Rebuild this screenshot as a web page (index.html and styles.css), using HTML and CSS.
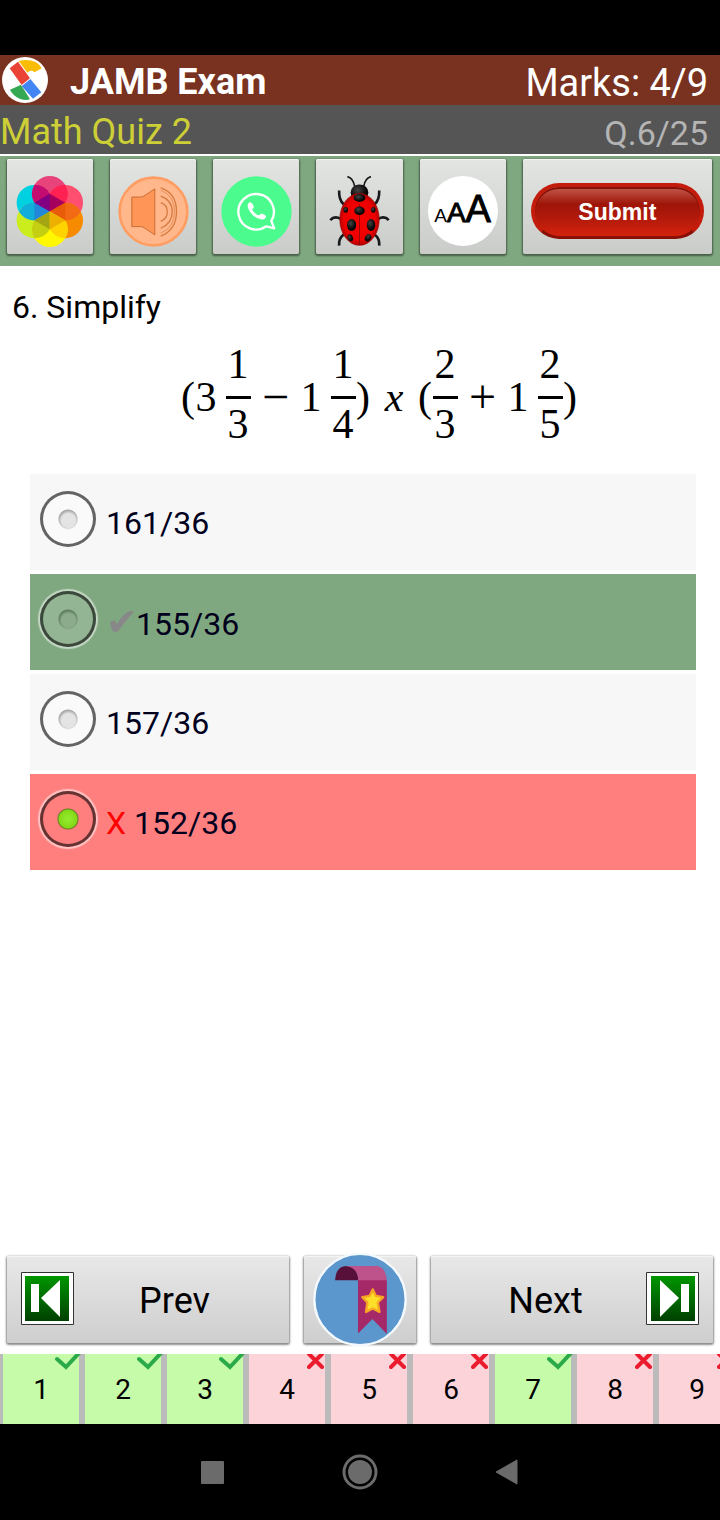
FILE: index.html
```html
<!DOCTYPE html>
<html lang="en">
<head>
<meta charset="utf-8">
<meta name="viewport" content="width=device-width, initial-scale=1">
<title>JAMB Exam</title>
<link rel="stylesheet" href="styles.css">
</head>
<body>
<div class="status-bar"></div>
<header>
  <div class="title-bar">
    <svg class="logo" viewBox="0 0 138 138" aria-hidden="true">
      <circle cx="69" cy="69" r="69" fill="#fff"/>
      <path d="M50 12C78 4 110 12 119 34L97 46C91 40 86 40 76 47Z" fill="#fbbc05"/>
      <path d="M24 98L57 83L84 127C60 134 34 119 24 98Z" fill="#34a853"/>
      <path d="M23 34L48 14L84 64L59 84Z" fill="#ea4335"/>
      <path d="M59 87L85 66L118 106L93 125Z" fill="#4285f4"/>
      <path d="M59 86L84 65" stroke="#fff" stroke-width="2" stroke-dasharray="4 3"/>
    </svg>
    <h1>JAMB Exam</h1>
    <span class="marks">Marks: 4/9</span>
  </div>
  <div class="quiz-bar">
    <h2>Math Quiz 2</h2>
    <span class="count">Q.6/25</span>
  </div>
</header>
<div class="toolbar">
  <button class="raised tool" aria-label="Themes">
    <svg class="tool-icon" viewBox="0 0 216 216" aria-hidden="true">
      <g>
        <circle cx="59" cy="81" r="54" fill="#00d1e0"/>
        <circle cx="153" cy="81" r="54" fill="#ff4f70"/>
        <circle cx="59" cy="135" r="54" fill="#cbec1d"/>
        <circle cx="153" cy="135" r="54" fill="#f78b00"/>
        <circle cx="106" cy="162" r="54" fill="#fff800"/>
        <circle cx="106" cy="54" r="54" fill="#e8447b"/>
      </g>
      <path d="M59 27A54 54 0 0 1 106 54L106 108L59 81A54 54 0 0 1 59 27Z" fill="#c40b70"/>
      <path d="M153 27A54 54 0 0 0 106 54L106 108L153 81A54 54 0 0 0 153 27Z" fill="#ff2152"/>
      <path d="M106 54L153 81L106 108L59 81Z" fill="#a5005e"/>
      <path d="M59 81L106 108A54 54 0 0 1 59 135A54 54 0 0 1 12 108A54 54 0 0 1 59 81Z" fill="#12aeda"/>
      <path d="M59 81L106 108L59 135Z" fill="#2187d8"/>
      <path d="M59 81L106 54L106 108Z" fill="#820081"/>
      <path d="M153 81A54 54 0 0 1 200 108A54 54 0 0 1 153 135L106 108Z" fill="#f26a14"/>
      <path d="M153 81L153 135L106 108Z" fill="#e85b08"/>
      <path d="M59 135L106 108L106 162A54 54 0 0 1 59 189A54 54 0 0 1 59 135Z" fill="#c3cf10"/>
      <path d="M106 108L106 162L59 135Z" fill="#a4a510"/>
      <path d="M106 108L153 135A54 54 0 0 1 153 189A54 54 0 0 1 106 162Z" fill="#ffd300"/>
      <path d="M106 108L153 135L106 162Z" fill="#eeb000"/>
    </svg>
  </button>
  <button class="raised tool" aria-label="Sound">
    <svg class="tool-icon" viewBox="0 0 216 216" aria-hidden="true">
      <circle cx="108" cy="108" r="103" fill="#ffb78b" stroke="#ff9d62" stroke-width="8"/>
      <path d="M42 64H69Q76 64 82 59L112 39V179L82 159Q76 154 69 154H42V64Z" fill="#ff9557" stroke="#c96c32" stroke-width="3"/>
      <path d="M130 81Q150 87 150 109T130 138M130 61Q165 73 165 109T130 159M130 36Q178 52 178 108T130 183" fill="none" stroke="#d47a3e" stroke-width="4"/>
      <path d="M130 43Q172 60 172 108T130 174" fill="none" stroke="#d47a3e" stroke-width="2"/>
    </svg>
  </button>
  <button class="raised tool" aria-label="WhatsApp">
    <svg class="tool-icon" viewBox="0 0 216 216" aria-hidden="true">
      <circle cx="108" cy="108" r="107" fill="#4cfb8e"/>
      <path d="M153 137A54 54 0 1 0 138 153L162 159Z" fill="none" stroke="#fff" stroke-width="7" stroke-linejoin="round"/>
      <path d="M88 80C81 82 79 91 84 101C92 118 107 130 123 132C132 133 138 127 137 122C132 117 126 114 123 114L114 120C105 116 99 110 95 102L100 95C99 88 93 80 88 80Z" fill="#fff"/>
    </svg>
  </button>
  <button class="raised tool" aria-label="Report a bug">
    <svg class="tool-icon" viewBox="0 0 216 216" aria-hidden="true">
      <defs><radialGradient id="shell"><stop offset="0" stop-color="#f80000"/><stop offset=".8" stop-color="#ed0000"/><stop offset="1" stop-color="#b30000"/></radialGradient>
      <radialGradient id="spot" cx=".4" cy=".35"><stop offset="0" stop-color="#454545"/><stop offset="1" stop-color="#050505"/></radialGradient></defs>
      <g fill="none" stroke="#171a1c" stroke-width="8">
        <path d="M46 44Q45 73 60 86M168 44Q169 73 154 86M19 134Q32 120 52 131M197 134Q184 120 164 131M46 212Q44 190 60 178M168 212Q170 190 154 178"/>
        <path stroke-width="5" d="M71 2Q88 5 93 31M143 2Q126 5 121 31"/>
      </g>
      <ellipse cx="108" cy="50" rx="27" ry="24" fill="url(#spot)"/>
      <ellipse cx="108" cy="132" rx="60" ry="79" fill="url(#shell)" stroke="#9e0707" stroke-width="2"/>
      <path d="M108 86V210" stroke="#6b0c05" stroke-width="2"/>
      <g fill="url(#spot)">
        <ellipse cx="108" cy="67" rx="18" ry="12"/><ellipse cx="108" cy="106" rx="16" ry="13"/>
        <ellipse cx="66" cy="103" rx="7" ry="9"/><ellipse cx="150" cy="103" rx="7" ry="9"/>
        <ellipse cx="84" cy="149" rx="14" ry="18"/><ellipse cx="143" cy="149" rx="13" ry="18"/>
        <ellipse cx="80" cy="188" rx="8" ry="11" transform="rotate(-25 80 188)"/><ellipse cx="134" cy="188" rx="9" ry="12" transform="rotate(30 134 188)"/>
      </g>
    </svg>
  </button>
  <button class="raised tool" aria-label="Text size">
    <span class="text-size"><span class="small">A</span><span class="medium">A</span><span class="large">A</span></span>
  </button>
  <button class="raised tool"><span class="submit">Submit</span></button>
</div>
<main>
  <p class="question">6. Simplify</p>
  <div class="equation">
    <span class="base paren">(</span><span class="base">3</span>
    <span class="fraction mixed"><span class="num">1</span><span class="den">3</span></span>
    <span class="base operator">−</span><span class="base">1</span>
    <span class="fraction mixed"><span class="num">1</span><span class="den">4</span></span>
    <span class="base paren">)</span><i class="base times">x</i><span class="base paren">(</span>
    <span class="fraction"><span class="num">2</span><span class="den">3</span></span>
    <span class="base operator">+</span><span class="base">1</span>
    <span class="fraction mixed"><span class="num">2</span><span class="den">5</span></span>
    <span class="base paren">)</span>
  </div>
  <div class="answers">
    <label class="answer"><input type="radio" name="answer"><span>161/36</span></label>
    <label class="answer correct"><input type="radio" name="answer"><span><span class="tick">✔</span>155/36</span></label>
    <label class="answer"><input type="radio" name="answer"><span>157/36</span></label>
    <label class="answer wrong"><input type="radio" name="answer" checked><span><span class="cross">X</span> 152/36</span></label>
  </div>
</main>
<svg class="defs" width="0" height="0" aria-hidden="true">
  <defs>
    <linearGradient id="green" x2="0" y2="1"><stop offset="0" stop-color="#009600"/><stop offset="1" stop-color="#004000"/></linearGradient>
    <symbol id="check" viewBox="0 0 28 18"><path d="M3 5L12 13L26 -2" fill="none" stroke="#2baa4a" stroke-width="4" stroke-linecap="round"/></symbol>
    <symbol id="x" viewBox="0 0 18 18"><path d="M2 0L15 13M15 0L2 13" fill="none" stroke="#ea1c2d" stroke-width="4" stroke-linecap="round"/></symbol>
  </defs>
</svg>
<div class="pager">
  <button class="raised page-button">
    <svg class="page-icon" viewBox="0 0 53 53" aria-hidden="true"><path d="M.5 .5H52.500V52.500H.5Z" fill="#fff" stroke="#333"/><path d="M4 4H48V49H4Z" fill="url(#green)"/><path d="M10 12H18V40H10ZM39 8V45L20 26Z" fill="#fff"/></svg>
    <span>Prev</span>
  </button>
  <button class="raised bookmark" aria-label="Bookmark">
    <svg class="bookmark-icon" viewBox="0 0 280 276" aria-hidden="true">
      <circle cx="140" cy="138" r="136" fill="#5b96cc" stroke="#f4f9ff" stroke-width="7"/>
      <path d="M66 81Q68 38 100 38Q134 40 135 81Z" fill="#571039"/>
      <path d="M98 38H192Q218 44 220 83H135Q134 42 98 38Z" fill="#bd538a"/>
      <path d="M134 81H220V241L177 196L134 239Z" fill="#a52868"/>
      <path d="M178 108L187 127L209 131L193 147L198 175L178 165L158 175L162 147L147 131L169 127Z" fill="#fcdf28" stroke="#f7a723" stroke-width="7" stroke-linejoin="round"/>
    </svg>
  </button>
  <button class="raised page-button next">
    <span>Next</span>
    <svg class="page-icon" viewBox="0 0 53 53" aria-hidden="true"><path d="M.5 .5H52.500V52.500H.5Z" fill="#fff" stroke="#333"/><path d="M5 4H49V49H5Z" fill="url(#green)"/><path d="M35 12H43V40H35ZM14 8V45L33 26Z" fill="#fff"/></svg>
  </button>
</div>
<nav class="numbers" aria-label="Questions">
  <button class="number right">1<svg class="mark"><use href="#check"/></svg></button>
  <button class="number right">2<svg class="mark"><use href="#check"/></svg></button>
  <button class="number right">3<svg class="mark"><use href="#check"/></svg></button>
  <button class="number missed">4<svg class="mark"><use href="#x"/></svg></button>
  <button class="number missed">5<svg class="mark"><use href="#x"/></svg></button>
  <button class="number missed">6<svg class="mark"><use href="#x"/></svg></button>
  <button class="number right">7<svg class="mark"><use href="#check"/></svg></button>
  <button class="number missed">8<svg class="mark"><use href="#x"/></svg></button>
  <button class="number missed">9<svg class="mark"><use href="#x"/></svg></button>
</nav>
<div class="system-nav">
  <button aria-label="Recent apps"><svg width="36" height="36"><rect x="7" y="7" width="23" height="23" rx="1" fill="#6b6b6b"/></svg></button>
  <button aria-label="Home"><svg width="36" height="36"><circle cx="18" cy="18" r="12" fill="#6b6b6b"/><circle cx="18" cy="18" r="16" fill="none" stroke="#6b6b6b" stroke-width="3"/></svg></button>
  <button aria-label="Back"><svg width="36" height="36"><path d="M6 18L27 6V30Z" fill="#6b6b6b" stroke="#6b6b6b" stroke-linejoin="round"/></svg></button>
</div>
</body>
</html>
```
FILE: styles.css
```css
* {
  box-sizing: border-box;
}

body {
  display: flex;
  flex-direction: column;
  min-height: 100vh;
  margin: 0;
  overflow-x: hidden;
  background: #fff;
  color: #000;
  font-family: Roboto, "Liberation Sans", sans-serif;
}

h1, h2, p {
  margin: 0;
}

button {
  margin: 0;
  padding: 0;
  border: 0;
  color: inherit;
  font-family: inherit;
}

svg {
  display: block;
}

.defs {
  position: absolute;
}

.status-bar {
  height: 55px;
  background: #000;
}

.title-bar {
  display: flex;
  align-items: center;
  height: 50px;
  padding: 0 12px 0 2px;
  background: #79321f;
  color: #fff;
}

.logo {
  width: 46px;
  height: 46px;
  margin-right: 22px;
}

h1 {
  padding-top: 4px;
  font-size: 36px;
  line-height: 46px;
}

.marks {
  margin-left: auto;
  padding-top: 6px;
  font-size: 38px;
  line-height: 44px;
}

.quiz-bar {
  display: flex;
  justify-content: space-between;
  height: 51px;
  padding-right: 12px;
  border-bottom: 2px solid #fff;
  background: #555;
}

h2 {
  color: #cdcf36;
  font-size: 36px;
  font-weight: 400;
  line-height: 54px;
}

.count {
  color: #b4b4b4;
  font-size: 34px;
  line-height: 56px;
}

.toolbar {
  display: grid;
  grid-template-columns: repeat(5, 88fr) 191fr;
  gap: 15px;
  padding: 3px 7px 11px 6px;
  background: #80a880;
}

.raised {
  border-radius: 2px;
  background: linear-gradient(#e8e8e8, #cecece);
  box-shadow: inset 0 1px #f4f4f4, 0 1px 2px 1px rgb(0 0 0 / 45%);
}

.tool {
  display: flex;
  align-items: center;
  justify-content: center;
  height: 95px;
  margin: 0 1px 1px;
  padding-top: 9px;
  background: linear-gradient(#e2e5e2, #c9ccc9);
}

.tool-icon {
  width: 71px;
  height: 71px;
}

.text-size {
  display: flex;
  align-items: baseline;
  justify-content: center;
  width: 70px;
  height: 70px;
  border-radius: 50%;
  background: #fff;
  font-family: "Liberation Sans", sans-serif;
  line-height: 66px;
}

.small {
  font-size: 19px;
}

.medium {
  font-size: 28px;
  -webkit-text-stroke: 1px #000;
}

.large {
  font-size: 38px;
  -webkit-text-stroke: 1px #000;
}

.submit {
  width: 100%;
  margin: 0 8px;
  padding-top: 2px;
  border: 4px solid #c41c0c;
  border-bottom: 3px solid #881006;
  border-radius: 28px;
  background: linear-gradient(#c45b4e, #9e1508 35%, #b31a0b 65%, #d4220e);
  box-shadow: inset 0 2px #861108;
  color: #fff;
  font: bold 23px/47px "Liberation Sans", sans-serif;
}

main {
  flex: 1;
  padding-bottom: 32px;
}

.question {
  padding: 20px 12px 0;
  font-size: 32px;
  line-height: 42px;
}

.equation {
  display: flex;
  align-items: center;
  justify-content: center;
  padding: 14px 0 28px 38px;
  font-family: "Liberation Serif", serif;
  font-size: 42px;
  line-height: 44px;
}

.base {
  padding-top: 5px;
}

.paren {
  width: 15px;
  text-align: center;
}

.fraction {
  width: 25px;
  text-align: center;
}

.mixed {
  margin-left: 9px;
}

.num, .den {
  display: block;
}

.num {
  padding-bottom: 10px;
  border-bottom: 3px solid #000;
}

.den {
  padding-top: 3px;
}

.operator {
  width: 50px;
  font-size: 48px;
  text-align: center;
}

.times {
  width: 47px;
  text-align: center;
}

.answers {
  display: grid;
  gap: 4px;
  padding: 0 24px 0 30px;
}

.answer {
  display: flex;
  align-items: center;
  gap: 10px;
  min-height: 96px;
  padding: 2px 10px 0;
  background: #f7f7f7;
  color: #00001c;
  font-size: 32px;
  line-height: 40px;
}

.answer input {
  appearance: none;
  flex: none;
  width: 56px;
  height: 56px;
  margin: 0 0 8px;
  border: 3px solid rgb(0 0 0 / 60%);
  border-radius: 50%;
  background: radial-gradient(circle at 51% 53%, #e4e4e4 7px, transparent 10px), radial-gradient(circle, #a9a9a9 9px, #fafafa 10px);
}

.correct input, .wrong input {
  box-shadow: 0 0 1px 2px rgb(255 255 255 / 55%);
}

.answer.correct input {
  background: radial-gradient(circle at 51% 53%, #8cab8c 7px, transparent 10px), radial-gradient(circle, #5f7d5f 9px, rgb(255 255 255 / 15%) 10px);
}

.answer input:checked {
  background: radial-gradient(circle, #91e82c 2px, #83d916 9px, #687a24 10px, transparent 11px);
}

.correct {
  background: #80a880;
}

.wrong {
  background: #ff7f7f;
}

.tick {
  display: inline-block;
  width: 30px;
  color: #888;
  font-family: "DejaVu Sans", sans-serif;
  font-size: 38px;
}

.cross {
  color: #f00;
}

.pager {
  display: grid;
  grid-template-columns: 282fr 112fr 282fr;
  gap: 15px;
  padding: 0 7px 11px;
}

.pager .raised {
  height: 87px;
}

.page-button {
  display: flex;
  align-items: center;
  padding: 0 14px;
  font-size: 36px;
  line-height: 48px;
}

.page-button span {
  flex: 1;
  padding-top: 2px;
}

.page-icon {
  flex: none;
  width: 53px;
  height: 53px;
  margin-bottom: 2px;
}

.bookmark {
  display: flex;
  align-items: center;
  justify-content: center;
}

.bookmark-icon {
  flex: none;
  width: 94px;
  height: 93px;
}

.numbers {
  display: flex;
  gap: 6px;
  padding-left: 3px;
  overflow: hidden;
  background: #bbb;
}

.number {
  position: relative;
  flex: none;
  width: 76px;
  height: 70px;
  padding-top: 2px;
  font-size: 28px;
  line-height: 68px;
}

.right {
  background: #c6fbaa;
}

.missed {
  background: #fbd3d8;
}

.mark {
  position: absolute;
  top: 0;
  right: -3px;
  width: 28px;
  height: 18px;
}

.missed .mark {
  right: 0;
  width: 18px;
}

.system-nav {
  display: flex;
  align-items: center;
  justify-content: center;
  gap: 112px;
  height: 96px;
  background: #000;
}

.system-nav button {
  background: transparent;
}
```
